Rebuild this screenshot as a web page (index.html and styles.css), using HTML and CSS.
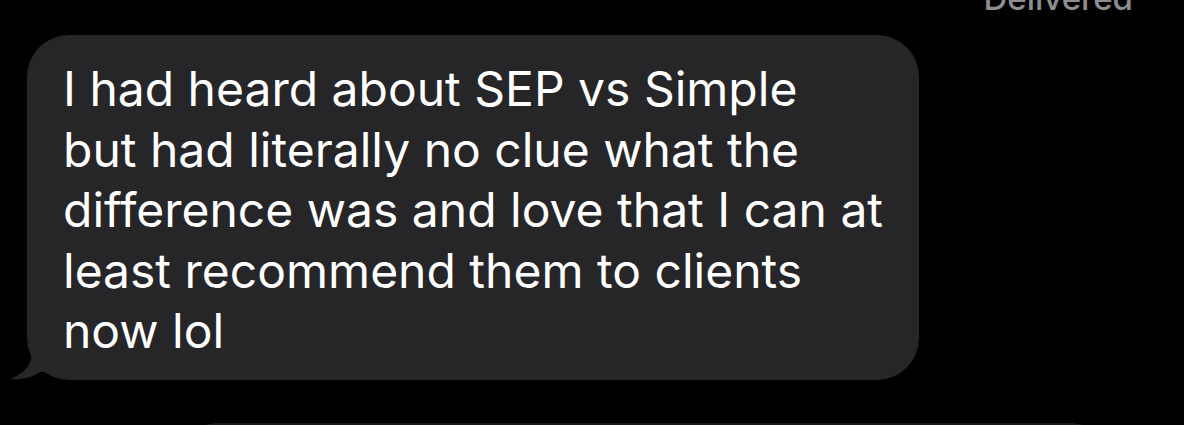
FILE: index.html
```html
<!DOCTYPE html>
<html>
<head>
<meta charset="utf-8">
<link rel="stylesheet" href="styles.css">
</head>
<body>
<div class="thread">
  <div class="status-row"><span class="status">Delivered</span></div>
  <div class="msg-row incoming">
    <div class="bubble">
      I had heard about SEP vs Simple<br>but had literally no clue what the<br>difference was and love that I can at<br>least recommend them to clients<br>now lol
      <svg class="tail" width="40" height="30" viewBox="0 0 40 30"><path d="M22 0 C22 12 18 22 0 29 C10 30 22 28 30 22 L40 22 L40 0 Z" fill="#262629"/></svg>
    </div>
  </div>
  <div class="msg-row outgoing">
    <div class="bubble-next"></div>
  </div>
</div>
</body>
</html>
```
FILE: styles.css
```css
html, body {
  margin: 0;
  padding: 0;
  background: #000;
}
.thread {
  display: flex;
  flex-direction: column;
  height: 425px;
  overflow: hidden;
  font-family: Inter, "Noto Sans", sans-serif;
}
.status-row {
  display: flex;
  justify-content: flex-end;
  padding-right: 51px;
  margin-top: -20px;
  height: 55px;
  flex-shrink: 0;
}
.status {
  color: #8d8d92;
  font-size: 33px;
  line-height: 36px;
  font-weight: 500;
}
.msg-row {
  display: flex;
  flex-shrink: 0;
}
.incoming {
  padding-left: 27px;
}
.bubble {
  position: relative;
  box-sizing: border-box;
  width: 892px;
  height: 345px;
  background: #262629;
  border-radius: 42px;
  color: #fff;
  font-size: 48px;
  line-height: 60.5px;
  padding: 24px 30px 0 36px;
}
.tail {
  position: absolute;
  left: -17px;
  bottom: 0;
}
.outgoing {
  padding-left: 178px;
  margin-top: 43px;
}
.bubble-next {
  width: 932px;
  height: 80px;
  background: #1b1b1d;
  border-radius: 42px;
}
```
